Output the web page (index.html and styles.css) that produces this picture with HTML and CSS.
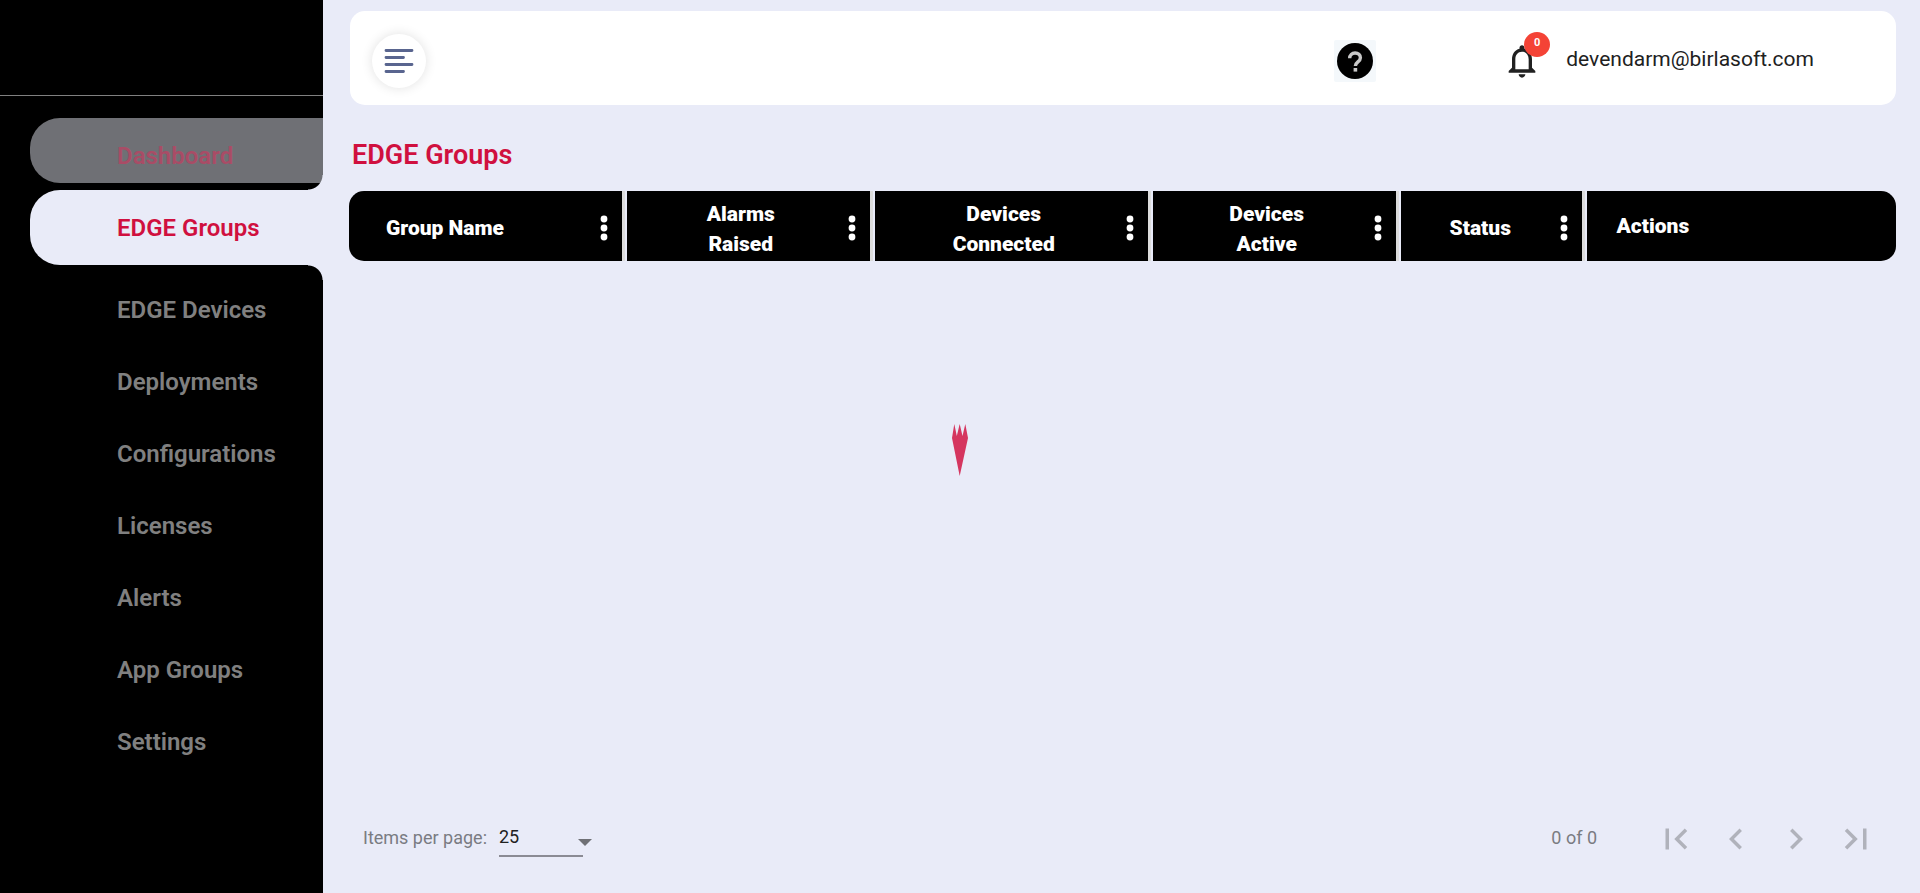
FILE: index.html
```html
<!DOCTYPE html>
<html lang="en">
<head>
<meta charset="utf-8">
<title>EDGE Groups</title>
<link rel="stylesheet" href="styles.css">
</head>
<body>
<div class="app">
  <aside class="sidebar">
    <div class="brand"></div>
    <nav class="nav">
      <a class="nav-item nav-item-hover" href="#dashboard">Dashboard</a>
      <a class="nav-item nav-item-active" href="#groups" aria-current="page">EDGE Groups</a>
      <a class="nav-item" href="#devices">EDGE Devices</a>
      <a class="nav-item" href="#deployments">Deployments</a>
      <a class="nav-item" href="#configurations">Configurations</a>
      <a class="nav-item" href="#licenses">Licenses</a>
      <a class="nav-item" href="#alerts">Alerts</a>
      <a class="nav-item" href="#app-groups">App Groups</a>
      <a class="nav-item" href="#settings">Settings</a>
    </nav>
  </aside>
  <main class="main">
    <header class="topbar">
      <button class="menu-toggle" type="button" aria-label="Toggle menu">
        <svg width="30" height="26" viewBox="0 0 30 26" fill="none" stroke="#59658f" stroke-width="2.8" stroke-linecap="round"><path d="M2 2.5h26M2 9.5h17.500M2 16.500h26M2 23.500h17.500"/></svg>
      </button>
      <div class="account">
        <button class="help" type="button" aria-label="Help">
          <svg width="36" height="36" viewBox="0 0 36 36"><circle cx="18" cy="18" r="18" fill="#000"/><path d="M12.700 15.300c0-3.300 2.300-5.300 5.400-5.300s5.300 1.900 5.300 4.700c0 4.300-5 4.100-5 8.300" fill="none" stroke="#c8c8c8" stroke-width="3.400"/><rect x="16.600" y="25" width="3.600" height="3.600" fill="#c8c8c8"/></svg>
        </button>
        <button class="bell" type="button" aria-label="Notifications">
          <svg width="40" height="40" viewBox="0 0 24 24" fill="#212121"><path d="M12 22c1.100 0 2-.9 2-2h-4c0 1.100.9 2 2 2zm6-6v-5c0-3.070-1.630-5.640-4.500-6.320V4c0-.83-.67-1.500-1.500-1.500s-1.500.67-1.500 1.500v.68C7.640 5.360 6 7.920 6 11v5l-2 2v1h16v-1l-2-2zm-2 1H8v-6c0-2.480 1.510-4.500 4-4.500s4 2.020 4 4.500v6z"/></svg>
          <span class="badge">0</span>
        </button>
        <span class="email">devendarm@birlasoft.com</span>
      </div>
    </header>
    <h1 class="title">EDGE Groups</h1>
    <table class="grid">
      <thead>
        <tr>
          <th class="w18"><div class="cell cell-first"><span class="label">Group Name</span><button class="dots" type="button" aria-label="Group Name options"><svg width="8" height="26" viewBox="0 0 8 26" fill="#fff"><circle cx="4" cy="4" r="3.400"/><circle cx="4" cy="13" r="3.400"/><circle cx="4" cy="22" r="3.400"/></svg></button></div></th>
          <th class="w16"><div class="cell cell-tall"><span class="label">Alarms<br>Raised</span><button class="dots" type="button" aria-label="Alarms Raised options"><svg width="8" height="26" viewBox="0 0 8 26" fill="#fff"><circle cx="4" cy="4" r="3.400"/><circle cx="4" cy="13" r="3.400"/><circle cx="4" cy="22" r="3.400"/></svg></button></div></th>
          <th class="w18"><div class="cell cell-tall"><span class="label">Devices<br>Connected</span><button class="dots" type="button" aria-label="Devices Connected options"><svg width="8" height="26" viewBox="0 0 8 26" fill="#fff"><circle cx="4" cy="4" r="3.400"/><circle cx="4" cy="13" r="3.400"/><circle cx="4" cy="22" r="3.400"/></svg></button></div></th>
          <th class="w16"><div class="cell cell-tall"><span class="label">Devices<br>Active</span><button class="dots" type="button" aria-label="Devices Active options"><svg width="8" height="26" viewBox="0 0 8 26" fill="#fff"><circle cx="4" cy="4" r="3.400"/><circle cx="4" cy="13" r="3.400"/><circle cx="4" cy="22" r="3.400"/></svg></button></div></th>
          <th class="w12"><div class="cell cell-narrow"><span class="label">Status</span><button class="dots" type="button" aria-label="Status options"><svg width="8" height="26" viewBox="0 0 8 26" fill="#fff"><circle cx="4" cy="4" r="3.400"/><circle cx="4" cy="13" r="3.400"/><circle cx="4" cy="22" r="3.400"/></svg></button></div></th>
          <th class="w20"><div class="cell cell-last"><span class="label">Actions</span></div></th>
        </tr>
      </thead>
    </table>
    <footer class="paginator">
      <label for="page-size">Items per page:</label>
      <div class="size">
        <select id="page-size"><option>10</option><option selected>25</option><option>50</option></select>
        <svg class="caret" width="14" height="7" viewBox="0 0 14 7" fill="#6f7075"><path d="M0 0h14L7 7z"/></svg>
      </div>
      <span class="range">0 of 0</span>
      <div class="pages">
        <button type="button" disabled aria-label="First page"><svg width="42" height="42" viewBox="0 0 24 24"><path d="M18.410 16.590L13.820 12l4.590-4.590L17 6l-6 6 6 6zM6 6h2v12H6z"/></svg></button>
        <button type="button" disabled aria-label="Previous page"><svg width="42" height="42" viewBox="0 0 24 24"><path d="M15.410 7.410L14 6l-6 6 6 6 1.410-1.410L10.830 12z"/></svg></button>
        <button type="button" disabled aria-label="Next page"><svg width="42" height="42" viewBox="0 0 24 24"><path d="M10 6L8.590 7.410 13.170 12l-4.580 4.590L10 18l6-6z"/></svg></button>
        <button type="button" disabled aria-label="Last page"><svg width="42" height="42" viewBox="0 0 24 24"><path d="M5.590 7.410L10.180 12l-4.590 4.590L7 18l6-6-6-6zM16 6h2v12h-2z"/></svg></button>
      </div>
    </footer>
  </main>
  <div class="loader" role="status" aria-label="Loading">
    <svg width="18" height="52" viewBox="0 0 18 52" fill="#d5355f"><path d="M1 14L3.300 0l2.500 12L8.700 0l2.800 12L14.300 0 17 14 8.700 52z"/></svg>
  </div>
</div>
</body>
</html>
```

FILE: styles.css
```css
* {
  box-sizing: border-box;
}

body {
  margin: 0;
  background: #e9ebf8;
  font-family: Roboto, "Liberation Sans", sans-serif;
  color: #212121;
}

button {
  border: 0;
  padding: 0;
  background: none;
  font: inherit;
}

svg {
  display: block;
}

.app {
  display: flex;
  min-height: 100vh;
}

/* Sidebar */
.sidebar {
  flex: 0 0 323px;
  background: #000;
}

.brand {
  height: 96px;
  border-bottom: 1px solid #808080;
}

.nav {
  display: flex;
  flex-direction: column;
  padding: 22px 0 0 30px;
}

.nav-item {
  height: 72px;
  padding-left: 87px;
  font-size: 24px;
  font-weight: 600;
  line-height: 76px;
  color: #808080;
  text-decoration: none;
}

.nav-item-hover {
  height: 65px;
  margin-bottom: 7px;
  border-radius: 30px 0 0 30px;
  background: #6f7075;
  color: #a94c66;
}

.nav-item-active {
  position: relative;
  height: 75px;
  margin-bottom: 7px;
  border-radius: 30px 0 0 30px;
  background: #e9ebf8;
  color: #d0103f;
}

.nav-item-active::before,
.nav-item-active::after {
  content: "";
  position: absolute;
  right: 0;
  width: 15px;
  height: 15px;
}

.nav-item-active::before {
  bottom: 100%;
  background: radial-gradient(circle at 0 0, transparent 14px, #e9ebf8 15px);
}

.nav-item-active::after {
  top: 100%;
  background: radial-gradient(circle at 0 100%, transparent 14px, #e9ebf8 15px);
}

/* Main column */
.main {
  flex: 1;
  min-width: 0;
  display: flex;
  flex-direction: column;
  padding: 11px 24px 24px 26px;
}

.topbar {
  display: flex;
  align-items: center;
  justify-content: space-between;
  height: 94px;
  margin-left: 1px;
  padding: 6px 82px 0 22px;
  border-radius: 15px;
  background: #fff;
}

.menu-toggle {
  display: grid;
  place-items: center;
  width: 54px;
  height: 54px;
  border-radius: 50%;
  background: #fff;
  box-shadow: 0 0 12px rgba(0, 0, 0, 0.12);
}

.account {
  display: flex;
  align-items: center;
}

.help {
  display: grid;
  place-items: center;
  width: 42px;
  height: 42px;
  margin-right: 126px;
  border-radius: 2px;
  background: #f4f8fb;
}

.bell {
  position: relative;
  margin-right: 24px;
}

.badge {
  position: absolute;
  top: -9px;
  right: -8px;
  width: 26px;
  height: 25px;
  border-radius: 50%;
  background: #f44336;
  color: #fff;
  font-size: 11px;
  font-weight: 700;
  line-height: 22px;
  text-align: center;
}

.email {
  font-size: 21px;
  font-weight: 400;
  line-height: 28px;
  padding-bottom: 4px;
}

.title {
  margin: 34px 0 20px 3px;
  font-size: 27px;
  font-weight: 600;
  line-height: 32px;
  color: #d0103f;
}

/* Table header */
.grid {
  width: 100%;
  table-layout: fixed;
  border-collapse: separate;
  border-spacing: 0;
}

.grid th {
  padding: 0;
  border-right: 2px solid #e9ebf8;
}

.grid th:last-child {
  border-right: 0;
}

.w18 { width: 18%; }
.w16 { width: 16%; }
.w12 { width: 12%; }
.w20 { width: 20%; }

.cell {
  display: flex;
  align-items: center;
  height: 70px;
  padding-right: 14px;
  padding-top: 4px;
  border-right: 3px solid #dcdcdc;
  background: #000;
  color: #fff;
  font-size: 21px;
  font-weight: 900;
  line-height: 30px;
}

.label {
  flex: 1;
  padding-left: 6px;
  text-align: center;
}

.cell-tall .label {
  padding-top: 2px;
}

.cell-first {
  padding-left: 31px;
  border-radius: 15px 0 0 15px;
}

.cell-first .label,
.cell-last .label {
  text-align: left;
}

.cell-narrow .label {
  padding-left: 0;
}

.cell-last {
  padding-left: 24px;
  padding-top: 0;
  border-right: 0;
  border-radius: 0 15px 15px 0;
}

/* Paginator */
.paginator {
  display: flex;
  align-items: center;
  height: 60px;
  margin-top: auto;
  padding: 0 10px 0 14px;
  font-size: 18px;
  font-weight: 400;
  line-height: 24px;
  color: #7a7b82;
}

.paginator label,
.range {
  padding-bottom: 2px;
}

.size {
  position: relative;
  margin-left: 12px;
}

.size select {
  width: 84px;
  height: 36px;
  padding: 0 0 2px;
  border: 0;
  border-bottom: 2px solid #8b8b94;
  border-radius: 0;
  appearance: none;
  background: none;
  font: inherit;
  color: #212121;
}

.caret {
  position: absolute;
  top: 18px;
  right: -9px;
  pointer-events: none;
}

.range {
  margin-left: auto;
}

.pages {
  display: flex;
  margin-left: 49px;
}

.pages button {
  display: grid;
  place-items: center;
  width: 60px;
  height: 60px;
}

.pages svg {
  fill: #b0b2bb;
}

/* Loading mark over the page */
.loader {
  position: fixed;
  inset: 0;
  display: grid;
  place-items: center;
  padding-top: 6px;
  pointer-events: none;
}
```
